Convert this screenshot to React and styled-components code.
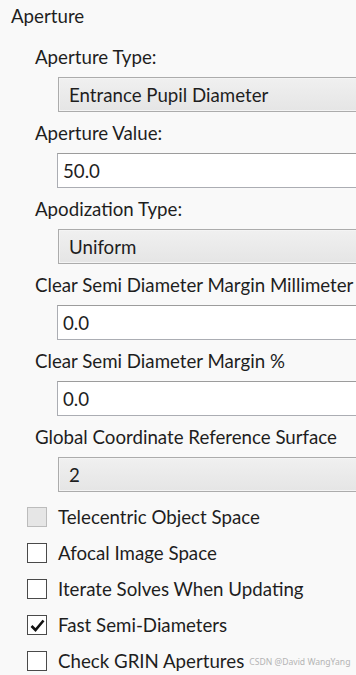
import React from "react";
import styled, { createGlobalStyle } from "styled-components";

const GlobalStyle = createGlobalStyle`
  html, body {
    margin: 0;
    padding: 0;
    background: #f9f9f9;
    overflow: hidden;
  }
  body {
    font-family: Lato, "Noto Sans", sans-serif;
    color: #1e1e1e;
  }
`;

const Panel = styled.div`
  width: 356px;
  height: 675px;
  overflow: hidden;
  font-size: 18.7px;
`;

const Header = styled.div`
  height: 33px;
  line-height: 33px;
  padding-bottom: 3px;
  padding-left: 11px;
`;

const Group = styled.div`
  padding-left: 35px;
`;

const Label = styled.div`
  height: 40px;
  line-height: 41px;
  padding-top: 1px;
  white-space: nowrap;
`;

const Combo = styled.div`
  box-sizing: border-box;
  margin-left: 23px;
  width: 330px;
  height: 35px;
  border: 1px solid #acacac;
  background: linear-gradient(#f0f0f0, #e5e5e5);
  box-shadow: inset 0 0 0 1px #f4f4f4;
  display: flex;
  align-items: center;
  padding-left: 10px;
`;

const TextBox = styled.div`
  box-sizing: border-box;
  margin-left: 22px;
  width: 330px;
  height: 35px;
  border: 1px solid #abadb3;
  border-top-color: #9c9c9c;
  background: #fff;
  display: flex;
  align-items: center;
  padding-left: 5px;
`;

const Checks = styled.div`
  padding-top: 7px;
  padding-left: 27px;
`;

const CheckRow = styled.div`
  height: 36px;
  display: flex;
  align-items: center;
  white-space: nowrap;
`;

const Box = styled.div`
  box-sizing: border-box;
  flex: none;
  width: 20px;
  height: 20px;
  margin-right: 11px;
  border: 1px solid ${(p) => (p.disabled ? "#bcbcbc" : "#4a4a4a")};
  background: ${(p) => (p.disabled ? "#e6e6e6" : "#fff")};
  display: flex;
  align-items: center;
  justify-content: center;
`;

const Watermark = styled.span`
  font-family: "Noto Sans", sans-serif;
  font-size: 8.6px;
  color: #b4b4b4;
  margin-left: 5px;
  margin-top: 2px;
`;

function Field({ label, value, combo }) {
  return (
    <Group>
      <Label>{label}</Label>
      {combo ? <Combo>{value}</Combo> : <TextBox>{value}</TextBox>}
    </Group>
  );
}

function Check({ label, checked, disabled, children }) {
  return (
    <CheckRow>
      <Box disabled={disabled}>
        {checked && (
          <svg width="15" height="13" viewBox="0 0 15 13">
            <path d="M1.5 7 L5.5 11 L13.5 1.5" fill="none" stroke="#111" strokeWidth="2.6" />
          </svg>
        )}
      </Box>
      {label}
      {children}
    </CheckRow>
  );
}

export default function App() {
  return (
    <>
      <GlobalStyle />
      <Panel>
        <Header>Aperture</Header>
        <Field label="Aperture Type:" value="Entrance Pupil Diameter" combo />
        <Field label="Aperture Value:" value="50.0" />
        <Field label="Apodization Type:" value="Uniform" combo />
        <Field label="Clear Semi Diameter Margin Millimeter" value="0.0" />
        <Field label="Clear Semi Diameter Margin %" value="0.0" />
        <Field label="Global Coordinate Reference Surface" value="2" combo />
        <Checks>
          <Check label="Telecentric Object Space" disabled />
          <Check label="Afocal Image Space" />
          <Check label="Iterate Solves When Updating" />
          <Check label="Fast Semi-Diameters" checked />
          <Check label="Check GRIN Apertures">
            <Watermark>CSDN @David WangYang</Watermark>
          </Check>
        </Checks>
      </Panel>
    </>
  );
}
